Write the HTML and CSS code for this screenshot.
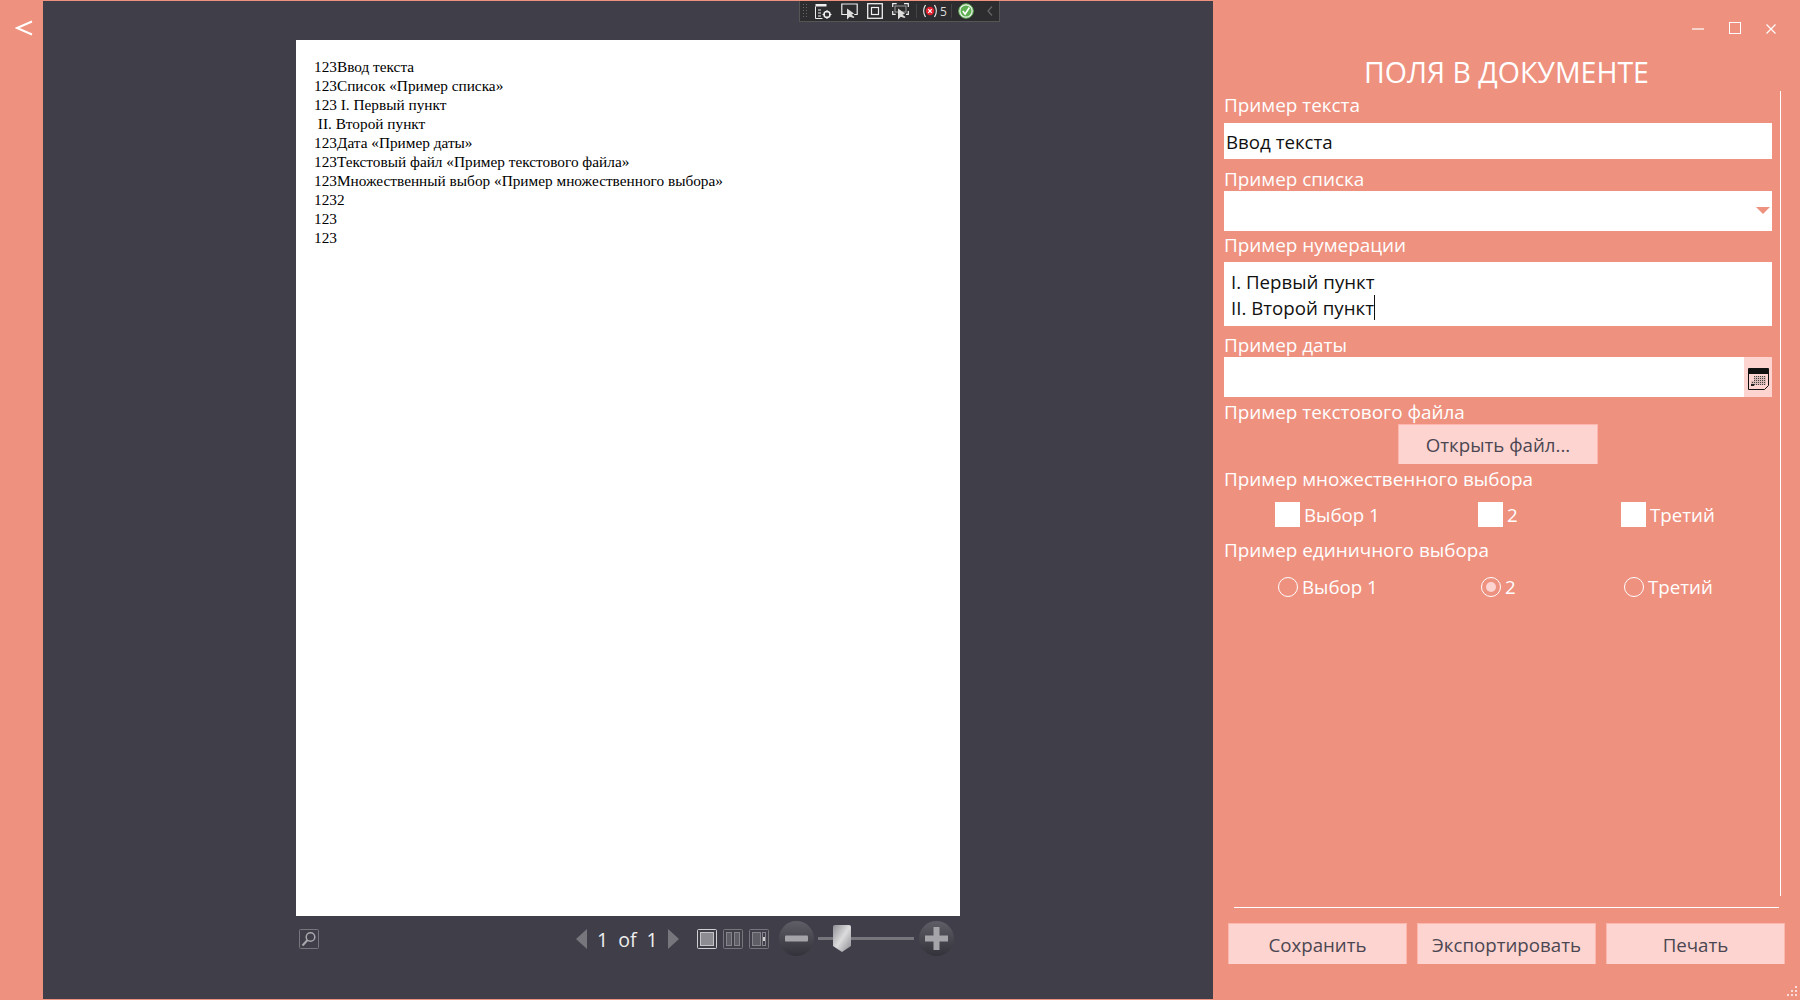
FILE: index.html
```html
<!DOCTYPE html>
<html lang="ru">
<head>
  <meta charset="UTF-8">
  <title>Поля в документе</title>
  <link rel="stylesheet" href="styles.css">
</head>
<body>

  <div class="back-strip">
    <svg class="back-icon" width="18" height="16" viewBox="0 0 18 16"><path d="M17 1.500 2 8l15 6.500" fill="none" stroke="#fff" stroke-width="2"/></svg>
  </div>

  <main class="viewer">
    <!-- панель отладки поверх окна -->
    <div class="debug-bar">
      <svg class="debug-grip" width="6" height="14" viewBox="0 0 6 14"><g fill="#666"><rect x="0" y="0" width="1" height="1"/><rect x="3" y="0" width="1" height="1"/><rect x="0" y="3" width="1" height="1"/><rect x="3" y="3" width="1" height="1"/><rect x="0" y="6" width="1" height="1"/><rect x="3" y="6" width="1" height="1"/><rect x="0" y="9" width="1" height="1"/><rect x="3" y="9" width="1" height="1"/><rect x="0" y="12" width="1" height="1"/><rect x="3" y="12" width="1" height="1"/></g></svg>
      <svg class="debug-icon" width="17" height="17" viewBox="0 0 17 17"><path d="M.5 3.500v12h7" fill="none" stroke="#eee"/><rect x=".5" y="1" width="11" height="2.500" fill="#eee"/><path d="M3 7h3M3 10h3M3 13h3" stroke="#eee"/><circle cx="12" cy="11.500" r="3" fill="none" stroke="#eee" stroke-width="1.500"/><path d="M12 7v2.500M12 13.500V16M7.500 11.500H10M14 11.500h2.500" stroke="#eee"/></svg>
      <svg class="debug-icon" width="17" height="17" viewBox="0 0 17 17"><path d="M6 11.500H.8V1h15.400v10.500h-3" fill="none" stroke="#eee" stroke-width="1.200"/><path d="M6 5.500v11l2.800-2.800 3.700 1.300 1-1-3-2.300 2.500-1.200z" fill="#ddd"/></svg>
      <svg class="debug-icon" width="16" height="16" viewBox="0 0 16 16"><rect x=".7" y=".7" width="14.600" height="14.600" fill="none" stroke="#eee" stroke-width="1.300"/><rect x="4.500" y="4.500" width="7" height="7" fill="none" stroke="#eee" stroke-width="1.200"/></svg>
      <svg class="debug-icon" width="17" height="17" viewBox="0 0 17 17"><path d="M.7 4V.7h4M12 .7h4.300V4M.7 8v3.300h3M16.300 8v3.300H14" fill="none" stroke="#eee" stroke-width="1.200"/><rect x="3" y="3" width="11" height="6" fill="none" stroke="#999"/><path d="M6 5.500v11l2.800-2.800 3.700 1.300 1-1-3-2.300 2.500-1.200z" fill="#ddd"/></svg>
      <span class="debug-sep"></span>
      <svg class="debug-errors" width="14" height="14" viewBox="0 0 14 14"><path d="M2.500 1C.2 4.500.2 9.500 2.500 13M11.500 1c2.300 3.500 2.300 8.500 0 12" fill="none" stroke="#eee" stroke-width="1.300"/><circle cx="7" cy="7" r="4.200" fill="#e5202e"/><path d="m5.200 5.200 3.600 3.600m0-3.600-3.600 3.600" stroke="#fff" stroke-width="1.200"/></svg>
      <span class="debug-count">5</span>
      <span class="debug-sep"></span>
      <svg class="debug-ok" width="16" height="16" viewBox="0 0 16 16"><circle cx="8" cy="8" r="7.300" fill="#e8efe8" stroke="#58a84c"/><circle cx="8" cy="8" r="5.500" fill="#5cb04f"/><path d="m4.800 8 2.300 3 4.300-6.500" fill="none" stroke="#fff" stroke-width="1.600"/></svg>
      <svg class="debug-chevron" width="6" height="10" viewBox="0 0 6 10"><path d="M5 .5 1 5l4 4.500" fill="none" stroke="#666" stroke-width="1.200"/></svg>
    </div>

    <div class="page">
      <p>123Ввод текста</p>
      <p>123Список «Пример списка»</p>
      <p>123 I. Первый пункт</p>
      <p>&nbsp;II. Второй пункт</p>
      <p>123Дата «Пример даты»</p>
      <p>123Текстовый файл «Пример текстового файла»</p>
      <p>123Множественный выбор «Пример множественного выбора»</p>
      <p>1232</p>
      <p>123</p>
      <p>123</p>
    </div>

    <div class="viewer-bar">
      <svg class="view-btn" width="20" height="20" viewBox="0 0 20 20"><rect x=".5" y=".5" width="19" height="19" rx="1" fill="none" stroke="#77767d"/><circle cx="11.500" cy="8" r="4.300" fill="none" stroke="#a9a8ac" stroke-width="1.500"/><path d="M8.500 11 3.500 16.500" stroke="#a9a8ac" stroke-width="2"/></svg>
      <div class="pager">
        <svg width="11" height="20" viewBox="0 0 11 20"><path d="M11 0v20L0 10z" fill="#77767d"/></svg>
        <span class="pager-text">1</span>
        <span class="pager-text">of</span>
        <span class="pager-text">1</span>
        <svg width="11" height="20" viewBox="0 0 11 20"><path d="M0 0v20l11-10z" fill="#77767d"/></svg>
      </div>
      <div class="view-modes">
        <svg width="20" height="20" viewBox="0 0 20 20"><rect x=".5" y=".5" width="19" height="19" rx="1" fill="#403e49" stroke="#d0d0d2"/><rect x="3.500" y="3.500" width="13" height="13" fill="#8d8c92" stroke="#c4c4c6"/></svg>
        <svg width="20" height="20" viewBox="0 0 20 20"><rect x=".5" y=".5" width="19" height="19" rx="1" fill="none" stroke="#77767d"/><rect x="3.500" y="3.500" width="5" height="13" fill="#5f5e66" stroke="#86858b"/><rect x="11.500" y="3.500" width="5" height="13" fill="#5f5e66" stroke="#86858b"/></svg>
        <svg width="20" height="20" viewBox="0 0 20 20"><rect x=".5" y=".5" width="19" height="19" rx="1" fill="none" stroke="#77767d"/><rect x="3.500" y="3.500" width="8" height="13" fill="#5f5e66" stroke="#86858b"/><rect x="13.500" y="3.500" width="3" height="13" fill="#403e49" stroke="#86858b"/><rect x="14" y="8" width="2" height="4" fill="#d0d0d2"/></svg>
      </div>
      <div class="zoom-box">
        <svg width="35" height="35" viewBox="0 0 35 35"><defs><linearGradient id="zoomFill" x1="0" y1="0" x2="0" y2="1"><stop offset="0" stop-color="#5f5d66"/><stop offset="1" stop-color="#33323a"/></linearGradient></defs><circle cx="17.500" cy="17.500" r="17.500" fill="url(#zoomFill)"/><rect x="6" y="14.500" width="23" height="6" rx="1" fill="#a5a4a9"/></svg>
        <div class="zoom-track">
          <svg class="zoom-thumb" width="18" height="27" viewBox="0 0 18 27"><defs><linearGradient id="thumbFill" x1="0" y1="0" x2="1" y2="1"><stop offset="0" stop-color="#8f8e94"/><stop offset=".5" stop-color="#dcdcdd"/><stop offset="1" stop-color="#8a898f"/></linearGradient></defs><path d="M2 0h14a2 2 0 0 1 2 2v19l-9 6-9-6V2a2 2 0 0 1 2-2z" fill="url(#thumbFill)"/></svg>
        </div>
        <svg width="35" height="35" viewBox="0 0 35 35"><circle cx="17.500" cy="17.500" r="17.500" fill="url(#zoomFill)"/><path d="M6 14.500h8.500V6h6v8.500H29v6h-8.500V29h-6v-8.500H6z" fill="#a5a4a9"/></svg>
      </div>
    </div>
  </main>

  <aside class="panel">
    <div class="window-btns">
      <svg width="12" height="12" viewBox="0 0 12 12"><path d="M0 7h12" stroke="#fff" stroke-width="1.200"/></svg>
      <svg width="12" height="12" viewBox="0 0 12 12"><rect x=".5" y=".5" width="11" height="11" fill="none" stroke="#fff"/></svg>
      <svg width="10" height="12" viewBox="0 0 10 12"><path d="m.5 2.500 9 9m0-9-9 9" stroke="#fff" stroke-width="1.200"/></svg>
    </div>

    <h1 class="panel-title">ПОЛЯ В ДОКУМЕНТЕ</h1>

    <form class="fields">
      <label class="field-label label-text">Пример текста</label>
      <div class="input input-text">Ввод текста</div>

      <label class="field-label label-list">Пример списка</label>
      <div class="input input-list">
        <svg class="list-arrow" width="14" height="7" viewBox="0 0 14 7"><path d="M0 0h14L7 7z" fill="#ee917f"/></svg>
      </div>

      <label class="field-label label-num">Пример нумерации</label>
      <div class="input input-num">
        <div>I. Первый пункт</div>
        <div><span class="caret">II. Второй пункт</span></div>
      </div>

      <label class="field-label label-date">Пример даты</label>
      <div class="input input-date">
        <div class="date-btn">
          <svg width="21" height="22" viewBox="0 0 21 22"><defs><pattern id="calDots" width="2" height="2" patternUnits="userSpaceOnUse"><rect width="2" height="2" fill="#d9b9b6"/><rect width="1" height="1" fill="#444"/></pattern></defs><path d="M.5.500h20v17l-4 4H.5z" fill="#fdd4d0" stroke="#111"/><rect x="1" y="1" width="19" height="5" fill="#111"/><rect x="6" y="8" width="12" height="9" fill="url(#calDots)"/><rect x="3" y="13" width="4" height="5" fill="url(#calDots)"/><rect x="3" y="16" width="3" height="2" fill="#222"/></svg>
        </div>
      </div>

      <label class="field-label label-file">Пример текстового файла</label>
      <div class="file-row">
        <button type="button" class="btn btn-file">Открыть файл...</button>
      </div>

      <label class="field-label label-multi">Пример множественного выбора</label>
      <div class="choice-row">
        <span class="choice"><i class="check"></i>Выбор 1</span>
        <span class="choice"><i class="check"></i>2</span>
        <span class="choice"><i class="check"></i>Третий</span>
      </div>

      <label class="field-label label-single">Пример единичного выбора</label>
      <div class="choice-row radio-row">
        <span class="choice"><i class="radio"></i>Выбор 1</span>
        <span class="choice"><i class="radio radio-on"></i>2</span>
        <span class="choice"><i class="radio"></i>Третий</span>
      </div>
    </form>

    <hr class="actions-line">

    <div class="actions">
      <button type="button" class="btn">Сохранить</button>
      <button type="button" class="btn">Экспортировать</button>
      <button type="button" class="btn">Печать</button>
    </div>

    <svg class="resize-grip" width="11" height="11" viewBox="0 0 11 11"><g fill="#fff" opacity=".7"><rect x="9" y="0" width="2" height="2"/><rect x="5" y="4" width="2" height="2"/><rect x="9" y="4" width="2" height="2"/><rect x="1" y="8" width="2" height="2"/><rect x="5" y="8" width="2" height="2"/><rect x="9" y="8" width="2" height="2"/></g></svg>
  </aside>

</body>
</html>
```

FILE: styles.css
```css
* {
  box-sizing: border-box;
}

body {
  margin: 0;
  height: 1000px;
  display: flex;
  overflow: hidden;
  background-color: #ee917f;
  font-family: "Open Sans", sans-serif;
}

.back-strip {
  width: 43px;
  flex-shrink: 0;
  padding: 20px 0 0 15px;
}

.back-icon {
  display: block;
}

/* visualizador */
.viewer {
  position: relative;
  width: 1170px;
  flex-shrink: 0;
  margin: 1px 0;
  background-color: #403e49;
  display: flex;
  flex-direction: column;
  align-items: center;
}

.debug-bar {
  position: absolute;
  top: 0;
  left: 756px;
  width: 201px;
  height: 21px;
  background-color: #2d2d30;
  border: 1px solid #555;
  border-top: none;
  display: flex;
  align-items: center;
  padding-left: 3px;
}

.debug-grip {
  margin-right: 6px;
}

.debug-icon {
  margin-right: 9px;
}

.debug-sep {
  width: 1px;
  height: 14px;
  margin: 0 6px 0 -2px;
  background-color: #444;
}

.debug-count {
  width: 7px;
  margin: 0 6px 0 3px;
  color: #ddd;
  font-size: 12px;
}

.debug-chevron {
  margin-left: 13px;
}

.page {
  width: 664px;
  height: 876px;
  margin-top: 39px;
  padding: 18.400px 18px 0 18px;
  background-color: #fff;
  font-family: "Liberation Serif", serif;
  font-size: 15.300px;
  line-height: 18.900px;
  color: #000;
}

.page p {
  margin: 0;
}

.viewer-bar {
  width: 664px;
  height: 35px;
  margin-top: 5px;
  display: flex;
  align-items: center;
  padding-left: 3px;
}

.view-btn {
  margin-right: 257px;
}

.pager {
  display: flex;
  align-items: center;
  gap: 10px;
  width: 121px;
}

.pager-text {
  color: #eee;
  font-size: 19.500px;
  line-height: 20px;
  padding-top: 2px;
}

.view-modes {
  display: flex;
  gap: 6px;
}

.zoom-box {
  display: flex;
  align-items: center;
  margin-left: 10px;
}

.zoom-track {
  position: relative;
  width: 96px;
  height: 3px;
  margin: 0 5px 0 4px;
  background-color: #77767d;
}

.zoom-thumb {
  position: absolute;
  top: -12px;
  left: 15px;
}

/* painel direito */
.panel {
  position: relative;
  flex: 1;
  color: #fff;
}

.window-btns {
  height: 41px;
  display: flex;
  align-items: flex-start;
  padding: 22px 0 0 479px;
  gap: 25px;
}

.panel-title {
  margin: 0;
  height: 50px;
  line-height: 62px;
  text-align: center;
  font-size: 28.500px;
  font-weight: 400;
}

.fields {
  width: 568px;
  height: 805px;
  padding: 2px 8px 0 11px;
  border-right: 1px solid #fff;
}

.field-label {
  display: block;
  height: 24px;
  line-height: 24px;
  font-size: 18.900px;
}

.label-text { margin: 0 0 6px; }
.label-list { margin: 8px 0 0; }
.label-num { margin: 2px 0 5px; }
.label-date { margin: 7px 0 0; }
.label-file { margin: 3px 0 0; }
.label-multi { margin: 3px 0 11px; }
.label-single { margin: 11px 0 12px; }

.input {
  position: relative;
  background-color: #fff;
  color: #111;
  font-size: 18.700px;
}

.input-text {
  height: 36px;
  line-height: 37px;
  padding-left: 2px;
}

.input-list {
  height: 40px;
}

.list-arrow {
  position: absolute;
  right: 2px;
  top: 16px;
}

.input-num {
  height: 64px;
  padding: 7px 0 0 7px;
  line-height: 26px;
}

.caret {
  border-right: 1px solid #111;
}

.input-date {
  height: 40px;
  display: flex;
  justify-content: flex-end;
}

.date-btn {
  width: 28px;
  background-color: #fdd4d0;
  display: flex;
  align-items: center;
  justify-content: center;
  padding-top: 3px;
}

.file-row {
  display: flex;
  padding-left: 174px;
}

.btn {
  height: 41px;
  padding: 0;
  border: 1px solid #fcb8af;
  border-bottom: none;
  background-color: #fdd4d0;
  color: #4b4752;
  font-family: "Open Sans", sans-serif;
  font-size: 18.700px;
}

.btn-file {
  width: 200px;
  height: 40px;
}

.choice-row {
  display: grid;
  grid-template-columns: 203px 143px auto;
  padding-left: 51px;
  height: 25px;
}

.radio-row {
  padding-left: 54px;
  height: 24px;
}

.choice {
  display: flex;
  align-items: center;
  gap: 4px;
  font-size: 18.700px;
}

.check {
  width: 25px;
  height: 25px;
  background-color: #fff;
}

.radio {
  width: 20px;
  height: 20px;
  border: 1px solid #fff;
  border-radius: 50%;
  display: flex;
  align-items: center;
  justify-content: center;
}

.radio-on::after {
  content: "";
  width: 10px;
  height: 10px;
  border-radius: 50%;
  background-color: #fdd4d0;
}

.actions-line {
  width: 545px;
  height: 1px;
  margin: 11px 0 0 21px;
  border: none;
  background-color: #fff;
}

.actions {
  display: grid;
  grid-template-columns: repeat(3, 179px);
  gap: 10px;
  margin: 15px 0 0 15px;
}

.resize-grip {
  position: absolute;
  right: 3px;
  bottom: 3px;
}
```
